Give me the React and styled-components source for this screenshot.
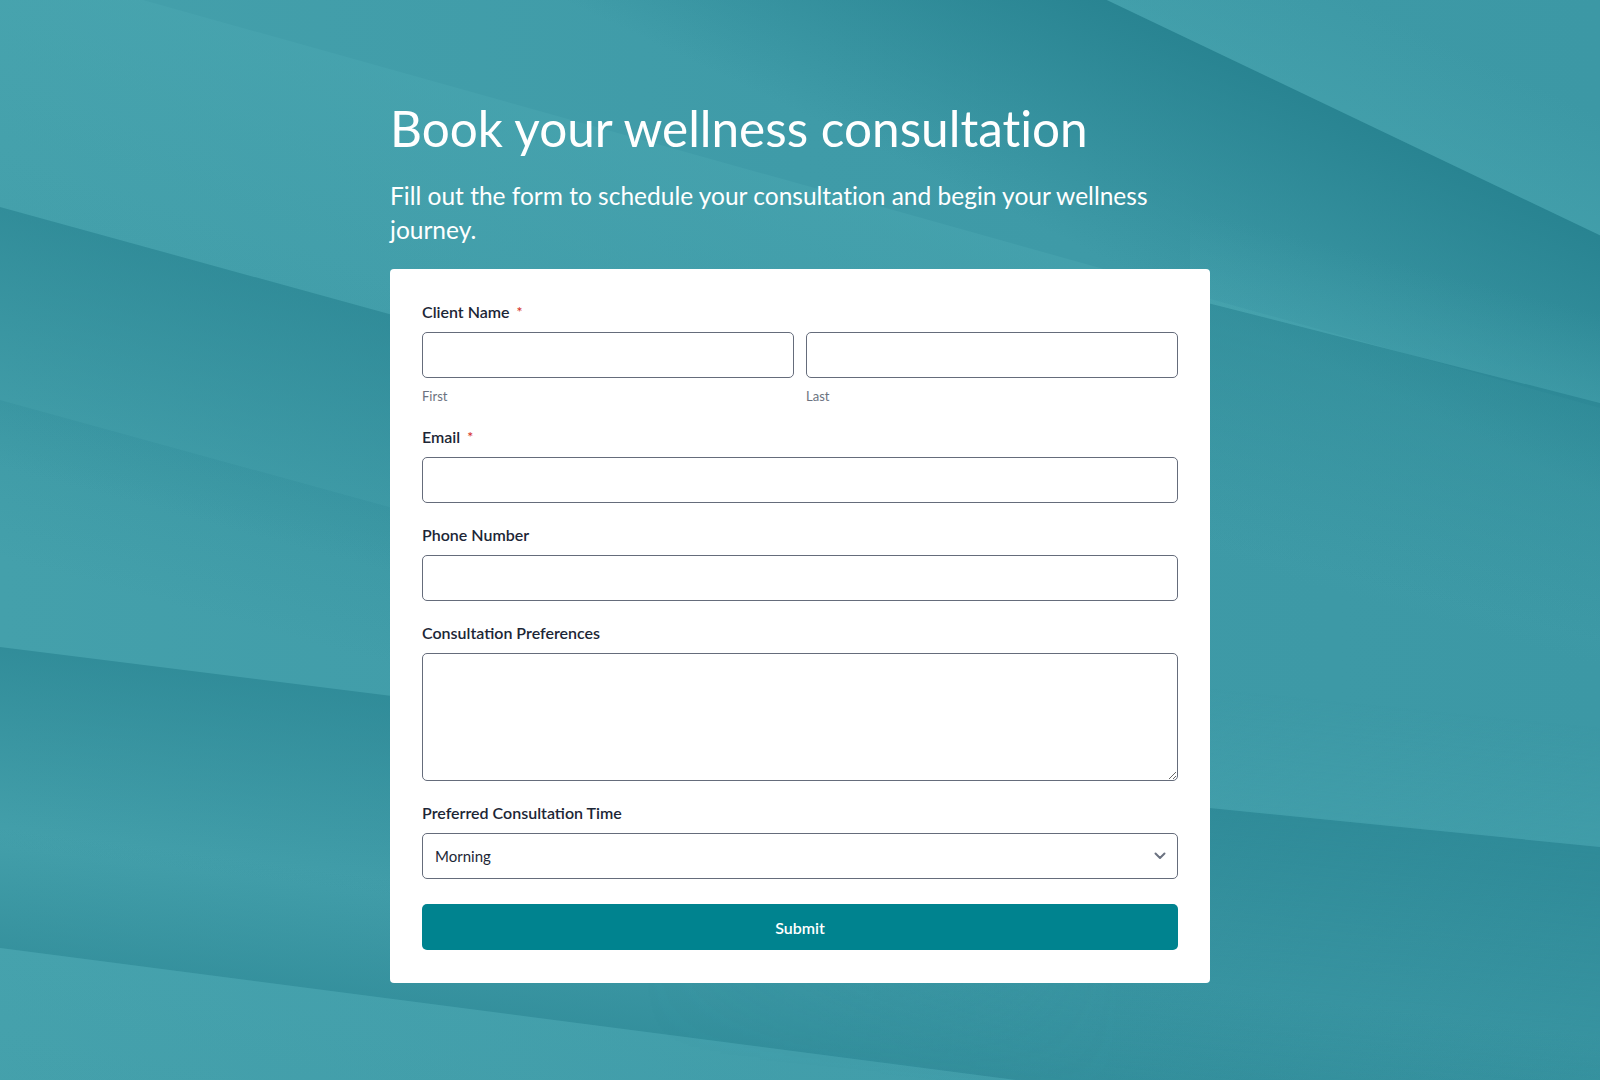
import React from 'react'
import styled, { createGlobalStyle } from 'styled-components'

const GlobalStyle = createGlobalStyle`
  * { box-sizing: border-box; }
  html, body { margin: 0; padding: 0; }
  body {
    font-family: Lato, "Open Sans", "Liberation Sans", sans-serif;
    background: #3e9aa7;
  }
`

const Page = styled.div`
  position: relative;
  min-height: 1080px;
  overflow: hidden;
  padding-top: 99px;
  background: linear-gradient(90deg, #44a0ab 0%, #3f9ba8 50%, #3c98a5 100%);
`

const Backdrop = styled.svg`
  position: absolute;
  inset: 0;
  width: 100%;
  height: 100%;
  z-index: 0;
`

const Wrapper = styled.div`
  position: relative;
  z-index: 1;
  width: 820px;
  margin: 0 auto;
`

const Title = styled.h1`
  margin: 0;
  font-size: 49.5px;
  line-height: 58px;
  font-weight: 400;
  color: #ffffff;
  font-variant-ligatures: none;
`

const Subtitle = styled.p`
  margin: 22px 0 0;
  font-size: 24.5px;
  line-height: 34px;
  font-weight: 400;
  color: #ffffff;
  font-variant-ligatures: none;
`

const Card = styled.form`
  margin-top: 22px;
  background: #ffffff;
  border-radius: 4px;
  padding: 31px 32px 33px;
  display: flex;
  flex-direction: column;
`

const Field = styled.div`
  display: flex;
  flex-direction: column;
  margin-bottom: ${p => (p.$last ? '25px' : '20px')};
`

const Label = styled.label`
  font-size: 16px;
  line-height: 24px;
  font-weight: 600;
  color: #1c2636;
  margin-bottom: 8px;
`

const Required = styled.span`
  color: #d6382e;
  font-size: 14px;
  margin-left: 7px;
  vertical-align: 1px;
`

const Row = styled.div`
  display: grid;
  grid-template-columns: 1fr 1fr;
  gap: 12px;
`

const Col = styled.div`
  display: flex;
  flex-direction: column;
`

const Input = styled.input`
  height: 46px;
  width: 100%;
  border: 1px solid #656c7b;
  border-radius: 5px;
  padding: 0 12px;
  font-family: inherit;
  font-size: 15px;
  color: #1c2636;
  background: #fff;
  outline: none;
`

const SubLabel = styled.span`
  margin-top: 9px;
  font-size: 13px;
  line-height: 18px;
  color: #6b7280;
`

const TextArea = styled.textarea`
  height: 128px;
  width: 100%;
  border: 1px solid #656c7b;
  border-radius: 5px;
  padding: 10px 12px;
  font-family: inherit;
  font-size: 15px;
  resize: vertical;
  outline: none;
  display: block;
`

const SelectWrap = styled.div`
  position: relative;
`

const Select = styled.select`
  appearance: none;
  -webkit-appearance: none;
  height: 46px;
  width: 100%;
  border: 1px solid #656c7b;
  border-radius: 5px;
  padding: 0 40px 0 12px;
  font-family: inherit;
  font-size: 15px;
  color: #1c2636;
  background: #fff;
  outline: none;
`

const Chevron = styled.svg`
  position: absolute;
  right: 12px;
  top: 50%;
  transform: translateY(-50%);
  pointer-events: none;
`

const Submit = styled.button`
  height: 46px;
  width: 100%;
  border: none;
  border-radius: 5px;
  background: #00838f;
  color: #ffffff;
  font-family: inherit;
  font-size: 16px;
  font-weight: 600;
  cursor: pointer;
`

// one soft band along the line y = a + s*x, fading away from it over t px (vertical)
function Band({ id, a, s, t, x0 = 0, x1 = 1600, color, op, up, mask }) {
  const y = x => a + s * x
  const d = up ? -t : t
  const pts = [
    [x0, y(x0)], [x1, y(x1)], [x1, y(x1) + d], [x0, y(x0) + d],
  ].map(p => p.join(',')).join(' ')
  const mx = (x0 + x1) / 2
  const k = d / (1 + s * s)
  return (
    <>
      <linearGradient id={id} gradientUnits="userSpaceOnUse"
        x1={mx} y1={y(mx)} x2={mx - s * k} y2={y(mx) + k}>
        <stop offset="0" stopColor={color} stopOpacity={op} />
        <stop offset="1" stopColor={color} stopOpacity="0" />
      </linearGradient>
      <polygon points={pts} fill={`url(#${id})`} mask={mask ? `url(#${mask})` : undefined} />
    </>
  )
}

function Stripes() {
  const dark = '#25808e'
  const light = '#4ba8b2'
  return (
    <Backdrop viewBox="0 0 1600 1080" preserveAspectRatio="none">
      <defs>
        <linearGradient id="fadeL" x1="0" y1="0" x2="1600" y2="0" gradientUnits="userSpaceOnUse">
          <stop offset="0.4" stopColor="#fff" stopOpacity="0" />
          <stop offset="0.7" stopColor="#fff" stopOpacity="1" />
        </linearGradient>
        <mask id="rightOnly" maskUnits="userSpaceOnUse" x="0" y="0" width="1600" height="1080">
          <rect x="0" y="0" width="1600" height="1080" fill="url(#fadeL)" />
        </mask>
      </defs>
      {/* light wash over top-left */}
      <Band id="b0" a={-40} s={0.28} t={260} color={light} op={0.45} />
      {/* top-right dark edge */}
      <Band id="b1" a={-528} s={0.477} t={260} color={dark} op={0.85} />
      <Band id="b1u" a={-528} s={0.477} t={120} color={light} op={0.35} up />
      {/* right mid */}
      <Band id="b2" a={-5} s={0.255} t={240} x0={1190} color={dark} op={0.5} />
      <Band id="b2u" a={-5} s={0.255} t={90} x0={1190} color={light} op={0.3} up />
      {/* left upper */}
      <Band id="b3" a={207} s={0.275} t={260} x1={420} color={dark} op={0.6} />
      <Band id="b4" a={400} s={0.275} t={160} x1={420} color={dark} op={0.18} />
      {/* left lower */}
      <Band id="b5" a={647} s={0.125} t={200} x1={420} color={dark} op={0.6} />
      <Band id="b6u" a={948} s={0.13} t={120} color={dark} op={0.45} up />
      <Band id="b6" a={948} s={0.13} t={160} color={light} op={0.25} />
      {/* right lower */}
      <Band id="b7" a={687} s={0.1} t={300} color={dark} op={0.55} mask="rightOnly" />
      <Band id="b7u" a={687} s={0.1} t={120} color={light} op={0.3} up mask="rightOnly" />
    </Backdrop>
  )
}

export default function App() {
  return (
    <>
      <GlobalStyle />
      <Page>
        <Stripes />
        <Wrapper>
          <Title>Book your wellness consultation</Title>
          <Subtitle>Fill out the form to schedule your consultation and begin your wellness journey.</Subtitle>
          <Card onSubmit={e => e.preventDefault()}>
            <Field>
              <Label>Client Name<Required>*</Required></Label>
              <Row>
                <Col>
                  <Input type="text" />
                  <SubLabel>First</SubLabel>
                </Col>
                <Col>
                  <Input type="text" />
                  <SubLabel>Last</SubLabel>
                </Col>
              </Row>
            </Field>
            <Field>
              <Label>Email<Required>*</Required></Label>
              <Input type="email" />
            </Field>
            <Field>
              <Label>Phone Number</Label>
              <Input type="tel" />
            </Field>
            <Field>
              <Label>Consultation Preferences</Label>
              <TextArea />
            </Field>
            <Field $last>
              <Label>Preferred Consultation Time</Label>
              <SelectWrap>
                <Select defaultValue="Morning">
                  <option>Morning</option>
                  <option>Afternoon</option>
                  <option>Evening</option>
                </Select>
                <Chevron width="12" height="8" viewBox="0 0 12 8">
                  <path d="M1.5 1.5 L6 6 L10.5 1.5" fill="none" stroke="#6b7280" strokeWidth="2" strokeLinecap="round" strokeLinejoin="round" />
                </Chevron>
              </SelectWrap>
            </Field>
            <Submit type="submit">Submit</Submit>
          </Card>
        </Wrapper>
      </Page>
    </>
  )
}
